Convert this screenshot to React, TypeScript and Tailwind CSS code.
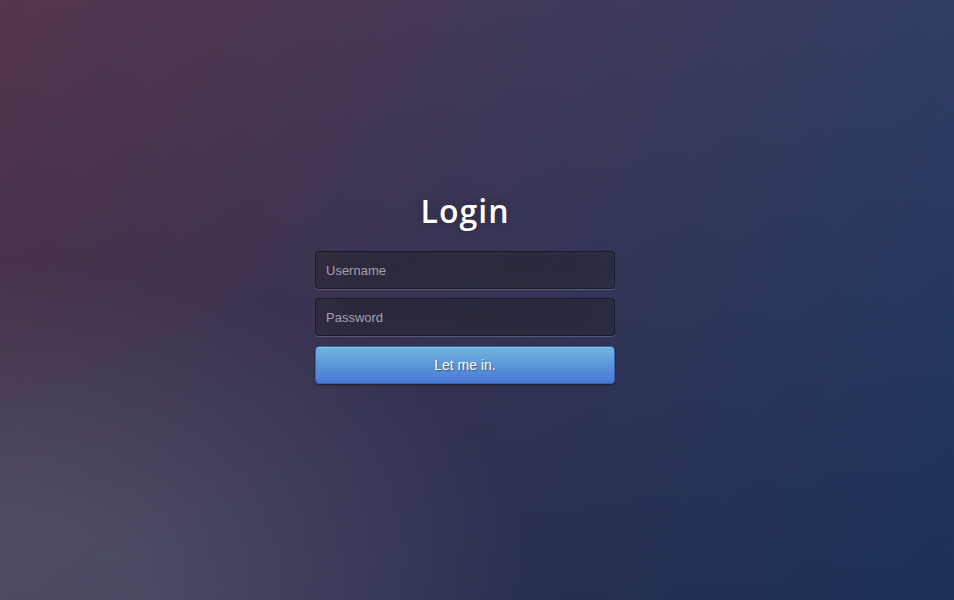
export default function App() {
  return (
    <div className="min-h-screen w-full overflow-hidden bg-[#0d2752] bg-[radial-gradient(ellipse_at_0%_100%,rgba(110,120,140,0.4)_10%,rgba(138,114,76,0)_40%),linear-gradient(to_bottom,rgba(57,150,200,0.22)_0%,rgba(42,60,87,0.4)_100%),linear-gradient(135deg,#5e1a2a_0%,#122a58_100%)] flex justify-center pt-[189px] pr-[24px]">
      <form className="w-[300px] flex flex-col" onSubmit={(e) => e.preventDefault()}>
        <h1 className="text-center text-white text-[32px] leading-[44px] font-semibold tracking-[1px] mb-[18px] [font-family:'Open_Sans',sans-serif] [text-shadow:0_0_10px_rgba(0,0,0,0.3)]">
          Login
        </h1>
        <input
          type="text"
          placeholder="Username"
          className="w-full h-[38px] mb-[9px] px-[10px] text-[13px] text-white rounded-[4px] border border-black/30 bg-black/30 outline-none placeholder:text-[#a3a3ad] [font-family:'Liberation_Sans',Arial,sans-serif] shadow-[inset_0_-5px_45px_rgba(100,100,100,0.2),0_1px_1px_rgba(255,255,255,0.2)]"
        />
        <input
          type="password"
          placeholder="Password"
          className="w-full h-[38px] mb-[10px] px-[10px] text-[13px] text-white rounded-[4px] border border-black/30 bg-black/30 outline-none placeholder:text-[#a3a3ad] [font-family:'Liberation_Sans',Arial,sans-serif] shadow-[inset_0_-5px_45px_rgba(100,100,100,0.2),0_1px_1px_rgba(255,255,255,0.2)]"
        />
        <button
          type="submit"
          className="w-full h-[38px] rounded-[4px] border border-[#3762bc] bg-[linear-gradient(to_bottom,#6eb6de,#4a77d4)] text-white text-[14px] [font-family:'Liberation_Sans',Arial,sans-serif] [text-shadow:1px_1px_1px_rgba(0,0,0,0.4)] shadow-[inset_0_1px_0_rgba(255,255,255,0.2),0_1px_2px_rgba(0,0,0,0.5)]"
        >
          Let me in.
        </button>
      </form>
    </div>
  );
}
